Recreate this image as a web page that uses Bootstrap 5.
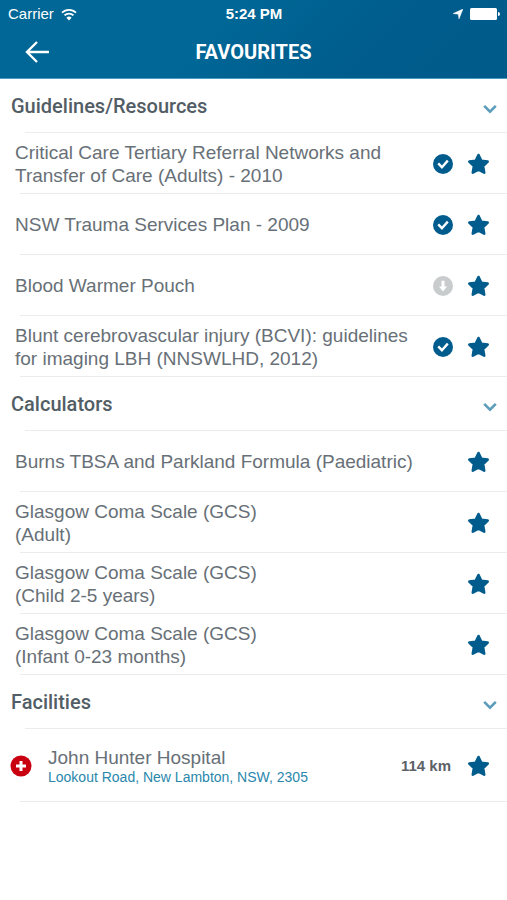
<!DOCTYPE html>
<html lang="en">
<head>
<meta charset="utf-8">
<meta name="viewport" content="width=device-width, initial-scale=1">
<title>Favourites</title>
<link href="https://cdn.jsdelivr.net/npm/bootstrap@5.3.0/dist/css/bootstrap.min.css" rel="stylesheet">
<style>
  :root { --brand: #005c8c; --ink: #687077; --rule: #ececee; }
  body { font-family: "Liberation Sans", Arial, sans-serif; color: var(--ink); background: #fff; }
  .app-header { background: linear-gradient(135deg, #006796 0%, #006796 42%, #005c8c 72%, #005b8b 100%); border-bottom: 1px solid #4a9cc0; }
  .status-line { font-size: 15px; line-height: 28px; padding: 0 7px 0 8px; }
  .status-line > * { flex: 1 1 0; gap: 7px; }
  .title-line { height: 50px; padding-bottom: 2px; display: grid; grid-template-columns: 74px 1fr 74px; align-items: center; }
  .title-line h1 { font-family: Roboto, sans-serif; font-weight: 700; font-size: 20px; line-height: 24px; }
  .plain-btn { background: none; border: 0; padding: 0; color: inherit; display: flex; align-items: center; justify-content: center; }
  .section-toggle { width: 100%; height: 54px; padding: 0 10px 0 11px; justify-content: space-between; font-family: Roboto, sans-serif; font-weight: 500; font-size: 20px; line-height: 24px; color: #525d65; }
  .section-toggle svg { margin-top: 6px; }
  .ruled { background: linear-gradient(var(--rule), var(--rule)) 20px 100% / 100% 1px no-repeat; }
  .ruled-head { background-position: 25px 100%; }
  .fav-row { min-height: 61px; padding: 0 17px 0 15px; font-size: 19px; line-height: 23px; }
  .fav-row .plain-btn { width: 23px; height: 24px; }
  .fav-state { margin-right: 14px; flex-shrink: 0; }
  .fav-facility { min-height: 73px; padding-left: 10px; }
  .fav-address { font-size: 14px; line-height: 17px; color: #2a87ac; text-decoration: none; display: block; }
  .fav-distance { font-size: 15px; font-weight: 700; color: #5b6268; }
  .star { color: var(--brand); }
</style>
</head>
<body>
<svg class="d-none" aria-hidden="true">
  <symbol id="star" viewBox="0 0 23 22"><path d="M11.500 2 L14.300 7.700 L20.700 8.600 L16.100 13.100 L17.200 19.700 L11.500 16.700 L5.800 19.700 L6.900 13.100 L2.300 8.600 L8.700 7.700Z" fill="currentColor" stroke="currentColor" stroke-width="2.600" stroke-linejoin="round"/></symbol>
  <symbol id="tick" viewBox="0 0 20 20"><circle cx="10" cy="10" r="10" fill="#005c8c"/><path d="M5.200 9.400 L8.900 13.200 L14.800 6.600" fill="none" stroke="#fff" stroke-width="2.400"/></symbol>
  <symbol id="down" viewBox="0 0 20 20"><circle cx="10" cy="10" r="10" fill="#c9cccd"/><path d="M8.500 4.800h3v5.600h2.500L10 15.400l-4-5h2.500z" fill="#fff"/></symbol>
  <symbol id="chev" viewBox="0 0 14 10"><path d="M1.200 1.800 L7 7.600 L12.800 1.800" fill="none" stroke="#5a9cba" stroke-width="2.600"/></symbol>
</svg>

<header class="app-header text-white">
  <div class="status-line d-flex align-items-center">
    <div class="d-flex align-items-center">Carrier
      <svg width="16" height="13" viewBox="0 0 16 13" aria-hidden="true"><g fill="none" stroke="#fff" stroke-width="1.800"><path d="M1 4.700a10 10 0 0 1 14 0"/><path d="M3.500 7.400a6.400 6.400 0 0 1 9 0"/></g><path d="M8 12.400 5.400 9.700a3.700 3.700 0 0 1 5.200 0z" fill="#fff"/></svg>
    </div>
    <div class="fw-bold text-center">5:24 PM</div>
    <div class="d-flex align-items-center justify-content-end">
      <svg width="10" height="10" viewBox="0 0 10 10" aria-hidden="true"><path d="M10 0 6 10 5.200 5.200 0 4.600z" fill="#fff" stroke="#fff" stroke-width=".4"/></svg>
      <svg width="30" height="12" viewBox="0 0 30 12" aria-hidden="true"><rect width="27" height="12" rx="1.500" fill="#fff"/><path d="M28 4a2 2 0 0 1 0 4z" fill="#fff"/></svg>
    </div>
  </div>
  <div class="title-line">
    <button class="plain-btn" type="button" aria-label="Back"><svg width="24" height="22" viewBox="0 0 24 22"><path d="M24 11H2M12 1 2 11l10 10" fill="none" stroke="#fff" stroke-width="2.400"/></svg></button>
    <h1 class="m-0 text-center">FAVOURITES</h1>
  </div>
</header>

<main>
  <section>
    <h2 class="m-0 ruled ruled-head"><button class="plain-btn section-toggle" type="button" data-bs-toggle="collapse" data-bs-target="#guidelines" aria-expanded="true" aria-controls="guidelines">Guidelines/Resources<svg width="14" height="10" aria-hidden="true"><use href="#chev"/></svg></button></h2>
    <ul class="list-unstyled m-0 collapse show" id="guidelines">
      <li class="fav-row ruled d-flex align-items-center"><span class="flex-grow-1">Critical Care Tertiary Referral Networks and<br>Transfer of Care (Adults) - 2010</span><svg class="fav-state" width="20" height="20" role="img" aria-label="Downloaded"><use href="#tick"/></svg><button class="plain-btn star" type="button" aria-label="Remove favourite"><svg width="23" height="22"><use href="#star"/></svg></button></li>
      <li class="fav-row ruled d-flex align-items-center"><span class="flex-grow-1">NSW Trauma Services Plan - 2009</span><svg class="fav-state" width="20" height="20" role="img" aria-label="Downloaded"><use href="#tick"/></svg><button class="plain-btn star" type="button" aria-label="Remove favourite"><svg width="23" height="22"><use href="#star"/></svg></button></li>
      <li class="fav-row ruled d-flex align-items-center"><span class="flex-grow-1">Blood Warmer Pouch</span><svg class="fav-state" width="20" height="20" role="img" aria-label="Not downloaded"><use href="#down"/></svg><button class="plain-btn star" type="button" aria-label="Remove favourite"><svg width="23" height="22"><use href="#star"/></svg></button></li>
      <li class="fav-row ruled d-flex align-items-center"><span class="flex-grow-1">Blunt cerebrovascular injury (BCVI): guidelines<br>for imaging LBH (NNSWLHD, 2012)</span><svg class="fav-state" width="20" height="20" role="img" aria-label="Downloaded"><use href="#tick"/></svg><button class="plain-btn star" type="button" aria-label="Remove favourite"><svg width="23" height="22"><use href="#star"/></svg></button></li>
    </ul>
  </section>

  <section>
    <h2 class="m-0 ruled ruled-head"><button class="plain-btn section-toggle" type="button" data-bs-toggle="collapse" data-bs-target="#calculators" aria-expanded="true" aria-controls="calculators">Calculators<svg width="14" height="10" aria-hidden="true"><use href="#chev"/></svg></button></h2>
    <ul class="list-unstyled m-0 collapse show" id="calculators">
      <li class="fav-row ruled d-flex align-items-center"><span class="flex-grow-1">Burns TBSA and Parkland Formula (Paediatric)</span><button class="plain-btn star" type="button" aria-label="Remove favourite"><svg width="23" height="22"><use href="#star"/></svg></button></li>
      <li class="fav-row ruled d-flex align-items-center"><span class="flex-grow-1">Glasgow Coma Scale (GCS)<br>(Adult)</span><button class="plain-btn star" type="button" aria-label="Remove favourite"><svg width="23" height="22"><use href="#star"/></svg></button></li>
      <li class="fav-row ruled d-flex align-items-center"><span class="flex-grow-1">Glasgow Coma Scale (GCS)<br>(Child 2-5 years)</span><button class="plain-btn star" type="button" aria-label="Remove favourite"><svg width="23" height="22"><use href="#star"/></svg></button></li>
      <li class="fav-row ruled d-flex align-items-center"><span class="flex-grow-1">Glasgow Coma Scale (GCS)<br>(Infant 0-23 months)</span><button class="plain-btn star" type="button" aria-label="Remove favourite"><svg width="23" height="22"><use href="#star"/></svg></button></li>
    </ul>
  </section>

  <section>
    <h2 class="m-0 ruled ruled-head"><button class="plain-btn section-toggle" type="button" data-bs-toggle="collapse" data-bs-target="#facilities" aria-expanded="true" aria-controls="facilities">Facilities<svg width="14" height="10" aria-hidden="true"><use href="#chev"/></svg></button></h2>
    <ul class="list-unstyled m-0 collapse show" id="facilities">
      <li class="fav-row fav-facility ruled d-flex align-items-center">
        <svg class="me-3 flex-shrink-0" width="22" height="22" viewBox="0 0 22 22" role="img" aria-label="Hospital"><circle cx="11" cy="11" r="10.500" fill="#c8000f"/><path d="M11 6v10M6 11h10" stroke="#fff" stroke-width="3"/></svg>
        <div class="flex-grow-1">John Hunter Hospital<a class="fav-address" href="#">Lookout Road, New Lambton, NSW, 2305</a></div>
        <span class="fav-distance me-3">114 km</span>
        <button class="plain-btn star" type="button" aria-label="Remove favourite"><svg width="23" height="22"><use href="#star"/></svg></button>
      </li>
    </ul>
  </section>
</main>
<script src="https://cdn.jsdelivr.net/npm/bootstrap@5.3.0/dist/js/bootstrap.bundle.min.js"></script>
</body>
</html>
